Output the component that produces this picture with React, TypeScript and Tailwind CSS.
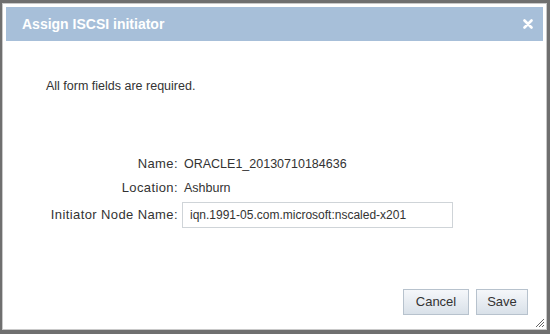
import React from "react";

export default function App() {
  return (
    <div
      className="w-[550px] h-[334px] bg-[#6f6f6f] pt-[3px] pl-[2px] pr-[3px] pb-[4px]"
      style={{ fontFamily: '"Liberation Sans", Arial, sans-serif' }}
    >
      <div className="relative w-full h-full bg-white border border-[#c9c9c9] p-[3px] flex flex-col">
        <div className="h-[34px] shrink-0 bg-[#a7bfd9] flex items-center justify-between pl-[16px] pr-[10px]">
          <span className="text-white font-bold text-[14px] leading-none">Assign ISCSI initiator</span>
          <svg width="10" height="10" viewBox="0 0 10 10">
            <path d="M1.5 1.5 L8.5 8.5 M8.5 1.5 L1.5 8.5" stroke="#ffffff" strokeWidth="2.6" strokeLinecap="round" />
          </svg>
        </div>
        <div className="flex-1 flex flex-col text-[12.5px] text-[#333333]">
          <div className="mt-[38px] pl-[40px] leading-[14px] text-[12.5px]">All form fields are required.</div>
          <div className="mt-[59px] flex flex-col">
            <div className="h-[24px] flex items-center">
              <div className="w-[172px] text-right text-[13px] tracking-[0.4px]">Name:</div>
              <div className="ml-[6px]">ORACLE1_20130710184636</div>
            </div>
            <div className="h-[24px] flex items-center">
              <div className="w-[172px] text-right text-[13px] tracking-[0.4px]">Location:</div>
              <div className="ml-[6px]">Ashburn</div>
            </div>
            <div className="mt-[2px] h-[26px] flex items-center">
              <div className="w-[172px] text-right text-[13px] tracking-[0.4px]">Initiator Node Name:</div>
              <div className="ml-[4px] w-[271px] h-[26px] border border-[#cfd4d8] flex items-center pl-[7px] text-[12px]">
                iqn.1991-05.com.microsoft:nscaled-x201
              </div>
            </div>
          </div>
        </div>
        <div className="flex justify-end gap-[7px] pr-[15px] pb-[11px]">
          <button className="w-[66px] h-[26px] border border-[#b7c2cd] bg-gradient-to-b from-[#f5f7fa] to-[#d9e1e9] text-[13px] text-[#333333]">
            Cancel
          </button>
          <button className="w-[52px] h-[26px] border border-[#b7c2cd] bg-gradient-to-b from-[#f5f7fa] to-[#d9e1e9] text-[13px] text-[#333333]">
            Save
          </button>
        </div>
        <svg className="absolute right-[1px] bottom-[1px]" width="11" height="11" viewBox="0 0 11 11">
          <path d="M10 2 L2 10 M10 5 L5 10 M10 8 L8 10" stroke="#666666" strokeWidth="1" />
        </svg>
      </div>
    </div>
  );
}
